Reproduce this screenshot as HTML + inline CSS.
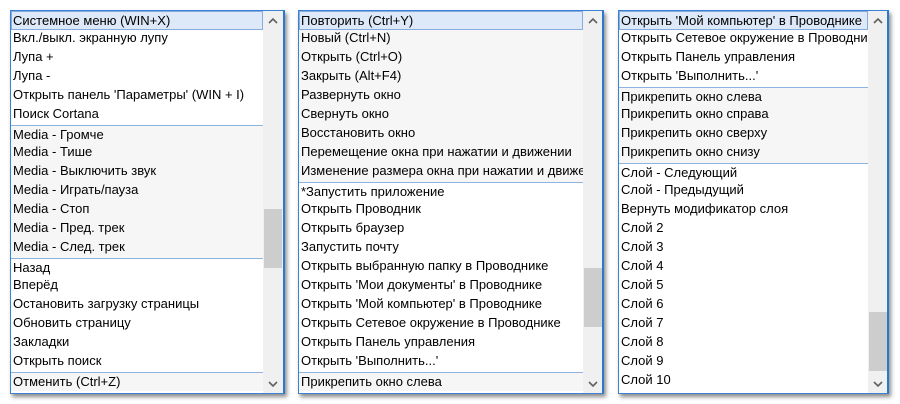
<!DOCTYPE html>
<html><head><meta charset="utf-8"><style>
html,body{margin:0;padding:0;width:900px;height:404px;background:#fff;overflow:hidden}
.p{position:absolute;top:10px;height:382px;border:1px solid #3c82d4;border-right:2px solid #2b78d0;background:#fff;box-shadow:2px 3px 4px rgba(0,0,0,.45);overflow:hidden}
.list{position:absolute;left:0;top:0;bottom:0}
.r{height:19px;line-height:19px;font:13px "Liberation Sans",sans-serif;color:#000;padding-left:2px;white-space:nowrap;box-sizing:border-box;overflow:hidden}
.g{background:#f6f6f6}
.sep{border-top:1px solid #8db3e2;line-height:18px}
.sel{background:#dde9f9;border:1px solid #84acdf;line-height:17px;padding-left:1px}
.sb{position:absolute;top:0;bottom:0;width:20px;background:#f0f0f0}
.th{position:absolute;left:1px;right:1px;background:#cdcdcd}
.ar{position:absolute;left:5px;width:10px;height:8px}
</style></head><body>

<div class="p" style="left:10px;width:272px">
<div class="list" style="width:252px">
<div class="r sel">Системное меню (WIN+X)</div>
<div class="r">Вкл./выкл. экранную лупу</div>
<div class="r">Лупа +</div>
<div class="r">Лупа -</div>
<div class="r">Открыть панель 'Параметры' (WIN + I)</div>
<div class="r">Поиск Cortana</div>
<div class="r g sep">Media - Громче</div>
<div class="r g">Media - Тише</div>
<div class="r g">Media - Выключить звук</div>
<div class="r g">Media - Играть/пауза</div>
<div class="r g">Media - Стоп</div>
<div class="r g">Media - Пред. трек</div>
<div class="r g">Media - След. трек</div>
<div class="r sep">Назад</div>
<div class="r">Вперёд</div>
<div class="r">Остановить загрузку страницы</div>
<div class="r">Обновить страницу</div>
<div class="r">Закладки</div>
<div class="r">Открыть поиск</div>
<div class="r g sep">Отменить (Ctrl+Z)</div>
</div>
<div class="sb" style="left:252px"><div class="th" style="top:198px;height:59px"></div>
<svg class="ar" style="top:6px" viewBox="0 0 10 8"><path d="M1 6 L5 2 L9 6" fill="none" stroke="#606060" stroke-width="1.6"/></svg>
<svg class="ar" style="bottom:5px" viewBox="0 0 10 8"><path d="M1 2 L5 6 L9 2" fill="none" stroke="#606060" stroke-width="1.6"/></svg></div>
</div>

<div class="p" style="left:298px;width:303px">
<div class="list" style="width:284px">
<div class="r g sel">Повторить (Ctrl+Y)</div>
<div class="r g">Новый (Ctrl+N)</div>
<div class="r g">Открыть (Ctrl+O)</div>
<div class="r g">Закрыть (Alt+F4)</div>
<div class="r g">Развернуть окно</div>
<div class="r g">Свернуть окно</div>
<div class="r g">Восстановить окно</div>
<div class="r g">Перемещение окна при нажатии и движении</div>
<div class="r g">Изменение размера окна при нажатии и движении</div>
<div class="r sep">*Запустить приложение</div>
<div class="r">Открыть Проводник</div>
<div class="r">Открыть браузер</div>
<div class="r">Запустить почту</div>
<div class="r">Открыть выбранную папку в Проводнике</div>
<div class="r">Открыть 'Мои документы' в Проводнике</div>
<div class="r">Открыть 'Мой компьютер' в Проводнике</div>
<div class="r">Открыть Сетевое окружение в Проводнике</div>
<div class="r">Открыть Панель управления</div>
<div class="r">Открыть 'Выполнить...'</div>
<div class="r g sep">Прикрепить окно слева</div>
</div>
<div class="sb" style="left:284px"><div class="th" style="top:257px;height:59px"></div>
<svg class="ar" style="top:6px" viewBox="0 0 10 8"><path d="M1 6 L5 2 L9 6" fill="none" stroke="#606060" stroke-width="1.6"/></svg>
<svg class="ar" style="bottom:5px" viewBox="0 0 10 8"><path d="M1 2 L5 6 L9 2" fill="none" stroke="#606060" stroke-width="1.6"/></svg></div>
</div>

<div class="p" style="left:618px;width:268px">
<div class="list" style="width:249px">
<div class="r sel">Открыть 'Мой компьютер' в Проводнике</div>
<div class="r">Открыть Сетевое окружение в Проводнике</div>
<div class="r">Открыть Панель управления</div>
<div class="r">Открыть 'Выполнить...'</div>
<div class="r g sep">Прикрепить окно слева</div>
<div class="r g">Прикрепить окно справа</div>
<div class="r g">Прикрепить окно сверху</div>
<div class="r g">Прикрепить окно снизу</div>
<div class="r sep">Слой - Следующий</div>
<div class="r">Слой - Предыдущий</div>
<div class="r">Вернуть модификатор слоя</div>
<div class="r">Слой 2</div>
<div class="r">Слой 3</div>
<div class="r">Слой 4</div>
<div class="r">Слой 5</div>
<div class="r">Слой 6</div>
<div class="r">Слой 7</div>
<div class="r">Слой 8</div>
<div class="r">Слой 9</div>
<div class="r">Слой 10</div>
</div>
<div class="sb" style="left:249px"><div class="th" style="top:301px;height:59px"></div>
<svg class="ar" style="top:6px" viewBox="0 0 10 8"><path d="M1 6 L5 2 L9 6" fill="none" stroke="#606060" stroke-width="1.6"/></svg>
<svg class="ar" style="bottom:5px" viewBox="0 0 10 8"><path d="M1 2 L5 6 L9 2" fill="none" stroke="#606060" stroke-width="1.6"/></svg></div>
</div>

</body></html>
